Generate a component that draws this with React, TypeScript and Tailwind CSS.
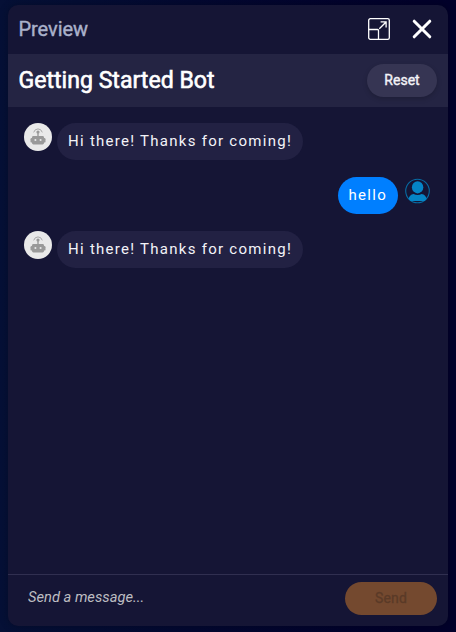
import React from "react";

function BotAvatar() {
  return (
    <svg className="h-7 w-7 shrink-0" viewBox="0 0 28 28" fill="none">
      <circle cx="14" cy="14" r="14" fill="#e9e9e9" />
      <g fill="#999999">
        <rect x="8" y="13" width="12" height="8.5" rx="1.4" />
        <rect x="6.5" y="15" width="15" height="4.6" rx="1.2" />
        <rect x="13.3" y="9" width="1.4" height="5" />
        <circle cx="14" cy="9" r="1.6" />
      </g>
      <path d="M9.8 9a4.4 4.4 0 0 1 8.4 0" stroke="#a0a0a0" strokeWidth="0.9" strokeLinecap="round" />
      <circle cx="11.4" cy="17" r="1.05" fill="#e9e9e9" />
      <circle cx="16.6" cy="17" r="1.05" fill="#e9e9e9" />
    </svg>
  );
}

function UserAvatar() {
  return (
    <svg className="mt-[0.5px] h-[26px] w-[26px] shrink-0" viewBox="0 0 26 26" fill="none">
      <circle cx="12.5" cy="13" r="11.8" stroke="#076ba3" strokeWidth="1.1" />
      <ellipse cx="12.6" cy="9.3" rx="5.7" ry="6.1" fill="#0585c7" />
      <path
        d="M3.6 21c.3-2.8 2.1-4.7 5-5.1 2.4 1.5 5.6 1.5 8 0 2.9.4 4.7 2.3 5 5.1l-1.9 2H5.5L3.6 21Z"
        fill="#0585c7"
      />
    </svg>
  );
}

function ExpandIcon() {
  return (
    <svg className="h-[22px] w-[22px]" viewBox="0 0 22 22" fill="none" stroke="#ffffff">
      <rect x="0.7" y="0.7" width="20.6" height="20.6" rx="1.6" strokeWidth="1.3" />
      <path d="M1 11.5h8.5a1 1 0 0 1 1 1V21M11.3 10.7l6.5-6.5M12.6 3.9h5.5v5.5" strokeWidth="1.3" />
    </svg>
  );
}

function BotMessage({ text }: { text: string }) {
  return (
    <div className="flex items-start gap-[5px]">
      <BotAvatar />
      <div className="flex h-[37px] w-[246px] items-center rounded-full bg-[#222143] pl-[11px] text-[15px] tracking-[1.27px] whitespace-nowrap text-[#f3f3f8]">
        {text}
      </div>
    </div>
  );
}

export default function App() {
  return (
    <div className="h-[632px] w-[456px] bg-linear-to-r from-[#051036] to-[#02002a] px-2 pt-[5px] pb-1.5 font-['Roboto',sans-serif]">
      <section className="flex h-[621px] flex-col overflow-hidden rounded-[10px] bg-[#151535] shadow-[0_0_8px_rgba(0,0,0,0.25)]">
        <header className="flex h-[49px] shrink-0 items-center justify-between pr-4 pb-0.5 pl-[10.5px]">
          <h2 className="pt-px text-[20px] font-normal tracking-[-0.06px] text-[#aab1cb] [-webkit-text-stroke:0.4px_#aab1cb]">Preview</h2>
          <div className="flex items-center gap-[22px]">
            <button aria-label="Expand"><ExpandIcon /></button>
            <button aria-label="Close">
              <svg className="h-5 w-5" viewBox="0 0 20 20" stroke="#ffffff" strokeWidth="3" strokeLinecap="round">
                <path d="M2.2 2.2l15.6 15.6M17.8 2.2L2.2 17.8" />
              </svg>
            </button>
          </div>
        </header>
        <div className="flex h-[53px] shrink-0 items-center justify-between bg-[#242443] pr-[11px] pl-[10.5px]">
          <h1 className="pt-0.5 text-[23.1px] font-normal text-white [-webkit-text-stroke:0.6px_white]">Getting Started Bot</h1>
          <button className="h-[33px] w-[70px] rounded-full bg-[#363553] text-[14px] text-[#f3f3f8] shadow-[0_2px_5px_rgba(0,0,0,0.18)] [-webkit-text-stroke:0.4px_#f3f3f8]">
            Reset
          </button>
        </div>
        <main className="flex flex-1 flex-col gap-[17px] px-4 pt-4">
          <BotMessage text="Hi there! Thanks for coming!" />
          <div className="flex items-start justify-end gap-[6.5px] pr-[1.5px]">
            <div className="flex h-[37px] w-[60px] items-center rounded-full bg-[#007fff] pl-[10.5px] text-[15px] tracking-[1.28px] text-white">
              hello
            </div>
            <UserAvatar />
          </div>
          <BotMessage text="Hi there! Thanks for coming!" />
        </main>
        <footer className="flex h-[52px] shrink-0 items-start justify-between border-t border-[#302f50] pt-[7px] pr-[11px] pl-5">
          <input
            className="h-[29px] w-[280px] bg-transparent text-[14.7px] text-white italic outline-none placeholder:text-[#bdbdc2] placeholder:opacity-100"
            placeholder="Send a message..."
          />
          <button disabled className="h-[33px] w-[92px] rounded-full bg-[#74492f] text-[14px] tracking-[0.2px] text-[#5a3a27] [-webkit-text-stroke:0.3px_#5a3a27]">
            Send
          </button>
        </footer>
      </section>
    </div>
  );
}
